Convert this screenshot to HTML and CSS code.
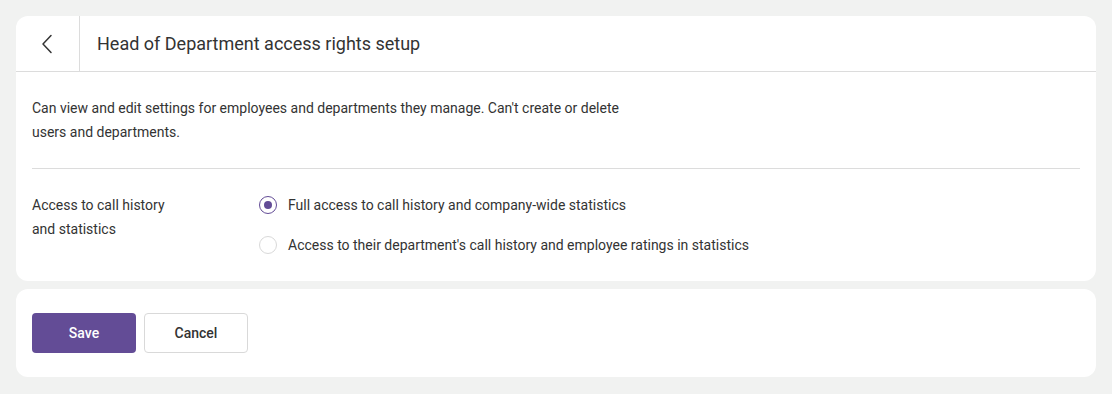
FILE: index.html
```html
<!DOCTYPE html>
<html lang="en">
<head>
  <meta charset="UTF-8">
  <title>Head of Department access rights setup</title>
  <link rel="stylesheet" href="styles.css">
</head>
<body>
  <div class="card">
    <header class="card-head">
      <button class="back-btn" aria-label="Back">
        <svg width="20" height="20" viewBox="0 0 20 20"><path d="M13 1.5 L5 10 L13 18.5" fill="none" stroke="#333" stroke-width="1.5" stroke-linecap="round" stroke-linejoin="round"/></svg>
      </button>
      <h1>Head of Department access rights setup</h1>
    </header>
    <div class="card-body">
      <p class="desc">Can view and edit settings for employees and departments they manage. Can't create or delete<br>users and departments.</p>
      <div class="row">
        <div class="row-label">Access to call history<br>and statistics</div>
        <div class="options">
          <label class="option"><span class="radio checked"></span>Full access to call history and company-wide statistics</label>
          <label class="option"><span class="radio"></span>Access to their department's call history and employee ratings in statistics</label>
        </div>
      </div>
    </div>
  </div>

  <div class="card actions">
    <button class="btn btn-primary">Save</button>
    <button class="btn btn-default">Cancel</button>
  </div>
</body>
</html>
```

FILE: styles.css
```css
body {
  margin: 0;
  padding: 16px;
  background: #f1f2f1;
  font-family: Roboto, "Liberation Sans", sans-serif;
  color: #333;
}
.card {
  background: white;
  border-radius: 12px;
  margin-bottom: 8px;
}
.card-head {
  display: flex;
  align-items: center;
  height: 55px;
  border-bottom: 1px solid #dcdcdc;
}
.back-btn {
  width: 64px;
  height: 55px;
  border: none;
  border-right: 1px solid #dcdcdc;
  background: none;
  display: flex;
  align-items: center;
  justify-content: center;
  padding: 0;
  cursor: pointer;
}
.card-head h1 {
  margin: 0 0 0 17px;
  font-size: 18px;
  font-weight: 400;
  color: #333;
}
.card-body {
  padding: 0 16px;
}
.desc {
  margin: 0;
  padding: 24px 0 24px;
  font-size: 14px;
  line-height: 24px;
  border-bottom: 1px solid #dcdcdc;
}
.row {
  display: flex;
  padding: 24px 0 24px;
}
.row-label {
  width: 227px;
  font-size: 14px;
  line-height: 24px;
}
.options {
  display: flex;
  flex-direction: column;
  gap: 16px;
}
.option {
  display: flex;
  align-items: center;
  font-size: 14px;
  line-height: 24px;
  cursor: pointer;
}
.radio {
  box-sizing: border-box;
  width: 18px;
  height: 18px;
  border: 1px solid #d9d9d9;
  border-radius: 50%;
  margin-right: 11px;
  position: relative;
}
.radio.checked {
  border: 1.5px solid #634c96;
}
.radio.checked::after {
  content: "";
  position: absolute;
  left: 3.5px;
  top: 3.5px;
  width: 8px;
  height: 8px;
  border-radius: 50%;
  background: #634c96;
}
.actions {
  display: flex;
  gap: 8px;
  padding: 24px 16px;
}
.btn {
  width: 104px;
  height: 40px;
  border-radius: 4px;
  font-family: inherit;
  font-size: 14px;
  font-weight: 500;
  cursor: pointer;
}
.btn-primary {
  background: #634c96;
  color: white;
  border: none;
}
.btn-default {
  background: white;
  color: #333;
  border: 1px solid #d9d9d9;
}
```
